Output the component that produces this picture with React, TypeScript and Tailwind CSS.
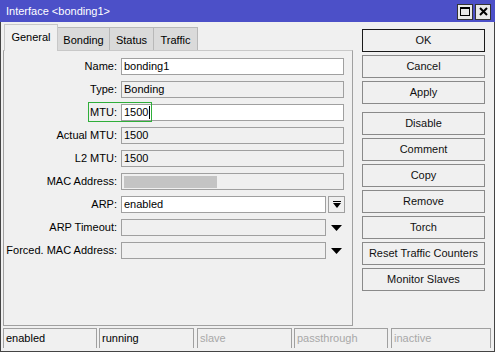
import React from "react";

const Tri = () => (
  <svg width="11" height="6" viewBox="0 0 11 6" className="block">
    <polygon points="0,0 11,0 5.5,6" fill="#000" />
  </svg>
);

type RowProps = { label: string; children: React.ReactNode };
const Row = ({ label, children }: RowProps) => (
  <div className="flex items-center h-[17px] mb-[6px]">
    <div className="w-[113px] text-right pr-[0px] leading-[17px] whitespace-nowrap">{label}</div>
    <div className="ml-[4px] flex items-center">{children}</div>
  </div>
);

const Input = ({ value, white, w = 223, children }: { value?: string; white?: boolean; w?: number; children?: React.ReactNode }) => (
  <div
    className={`h-[17px] border border-[#a0a0a0] pl-[2px] leading-[15px] flex items-center ${white ? "bg-white" : "bg-[#f0f0f0]"}`}
    style={{ width: w }}
  >
    {value}
    {children}
  </div>
);

const Btn = ({ label, def, mt = 3 }: { label: string; def?: boolean; mt?: number }) => (
  <div
    className={`h-[23px] w-[123px] flex items-center justify-center border ${def ? "border-[#1a1a1a]" : "border-[#8a8a8a]"} bg-[#f0f0f0] text-[#101010]`}
    style={{ marginTop: mt }}
  >
    {label}
  </div>
);

export default function App() {
  return (
    <div className="w-[495px] h-[352px] bg-[#f0f0f0] flex flex-col overflow-hidden font-['Liberation_Sans',Arial,sans-serif] text-[11px] text-black">
      {/* title bar */}
      <div className="h-[22px] bg-[#4c50c8] flex items-center pl-[6px] pr-[4px] shrink-0">
        <div className="text-white text-[11px] leading-none">Interface &lt;bonding1&gt;</div>
        <div className="ml-auto flex gap-[2px] mt-[1px]">
          <div className="w-[16px] h-[16px] bg-[#e8e8e8] border border-[#333] flex items-center justify-center">
            <div className="w-[10px] h-[9px] border border-black border-t-[2px]" />
          </div>
          <div className="w-[16px] h-[16px] bg-[#e8e8e8] border border-[#333] flex items-center justify-center">
            <svg width="9" height="9" viewBox="0 0 9 9">
              <path d="M1 1 L8 8 M8 1 L1 8" stroke="#000" strokeWidth="2" />
            </svg>
          </div>
        </div>
      </div>

      {/* body */}
      <div className="flex-1 flex flex-col border-l border-r border-b border-[#444]">
        <div className="flex h-[304px]">
          {/* left column */}
          <div className="ml-[2px] pt-[2px] flex flex-col">
            <div className="h-[26px] flex items-end pl-[1px]">
              <div className="h-[27px] w-[54px] bg-[#f0f0f0] border-t border-l border-r border-[#c8c8c8] relative z-10 -mb-[1px] flex justify-center pt-[4px]">
                General
              </div>
              <div className="h-[23px] w-[52px] bg-[#dadada] border-t border-r border-[#b8b8b8] flex justify-center pt-[4px]">
                Bonding
              </div>
              <div className="h-[23px] w-[44px] bg-[#dadada] border-t border-r border-[#b8b8b8] flex justify-center pt-[4px]">
                Status
              </div>
              <div className="h-[23px] w-[44px] bg-[#dadada] border-t border-r border-[#b8b8b8] flex justify-center pt-[4px]">
                Traffic
              </div>
            </div>
            <div className="w-[350px] h-[276px] border border-[#a0a0a0] border-t-[#c8c8c8] pt-[7px] relative">
              <Row label="Name:">
                <Input value="bonding1" white />
              </Row>
              <Row label="Type:">
                <Input value="Bonding" />
              </Row>
              <Row label="MTU:">
                <Input white>
                  <span>1500</span>
                  <span className="inline-block w-[1px] h-[13px] bg-black ml-[1px]" />
                </Input>
              </Row>
              <Row label="Actual MTU:">
                <Input value="1500" />
              </Row>
              <Row label="L2 MTU:">
                <Input value="1500" />
              </Row>
              <Row label="MAC Address:">
                <Input>
                  <div className="w-[93px] h-[12px] bg-[#c4c4c4]" />
                </Input>
              </Row>
              <Row label="ARP:">
                <Input value="enabled" white w={205} />
                <div className="ml-[2px] w-[17px] h-[17px] border border-[#a0a0a0] flex flex-col items-center justify-center">
                  <div className="w-[8px] h-[1px] bg-black mb-[1px]" />
                  <svg width="8" height="5" viewBox="0 0 8 5" className="block">
                    <polygon points="0,0 8,0 4,5" fill="#000" />
                  </svg>
                </div>
              </Row>
              <Row label="ARP Timeout:">
                <Input w={205} />
                <div className="ml-[5px]">
                  <Tri />
                </div>
              </Row>
              <Row label="Forced. MAC Address:">
                <Input w={205} />
                <div className="ml-[5px]">
                  <Tri />
                </div>
              </Row>
              <div className="absolute left-[84px] top-[51px] w-[64px] h-[20px] border border-[#2fae3a] pointer-events-none" />
            </div>
          </div>

          {/* buttons */}
          <div className="ml-[9px] pt-[4px] flex flex-col">
            <Btn label="OK" def mt={3} />
            <Btn label="Cancel" />
            <Btn label="Apply" />
            <Btn label="Disable" mt={8} />
            <Btn label="Comment" />
            <Btn label="Copy" />
            <Btn label="Remove" />
            <Btn label="Torch" />
            <Btn label="Reset Traffic Counters" />
            <Btn label="Monitor Slaves" />
          </div>
        </div>

        {/* status bar */}
        <div className="flex mt-[2px] ml-[2px] h-[20px]">
          <div className="w-[94px] h-[20px] border-t border-l border-r border-[#a0a0a0] pl-[2px] leading-[18px]">enabled</div>
          <div className="ml-[2px] w-[95px] h-[20px] border-t border-l border-r border-[#a0a0a0] pl-[2px] leading-[18px]">running</div>
          <div className="ml-[3px] w-[95px] h-[20px] border-t border-l border-r border-[#a0a0a0] pl-[2px] leading-[18px] text-[#a8a8a8]">slave</div>
          <div className="ml-[2px] w-[94px] h-[20px] border-t border-l border-r border-[#a0a0a0] pl-[2px] leading-[18px] text-[#a8a8a8]">passthrough</div>
          <div className="ml-[3px] w-[100px] h-[20px] border-t border-l border-r border-[#a0a0a0] pl-[2px] leading-[18px] text-[#a8a8a8]">inactive</div>
        </div>
      </div>
    </div>
  );
}
